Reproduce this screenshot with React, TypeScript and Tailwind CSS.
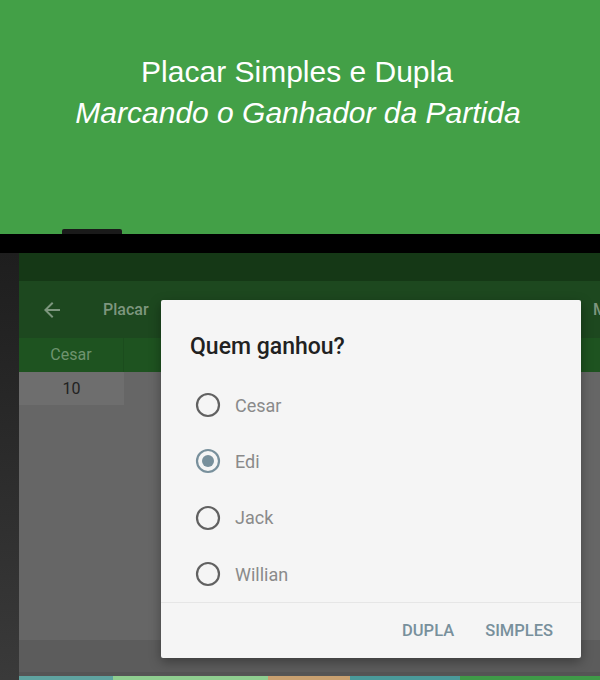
import React from "react";

function Radio({ checked }: { checked?: boolean }) {
  return (
    <svg width="26" height="26" viewBox="0 0 26 26">
      <circle cx="13" cy="13" r="11" fill="none" stroke={checked ? "#78909c" : "#616161"} strokeWidth="2.2" />
      {checked && <circle cx="13" cy="13" r="6" fill="#78909c" />}
    </svg>
  );
}

export default function App() {
  const names = ["Cesar", "Edi", "Jack", "Willian"];
  return (
    <div className="w-[600px] h-[680px] overflow-hidden flex flex-col bg-black" style={{ fontFamily: "Roboto, 'Liberation Sans', sans-serif" }}>
      <div className="relative h-[234px] shrink-0 bg-[#43a047] flex flex-col items-center pt-[51px] text-white" style={{ fontFamily: "'Liberation Sans', Arial, sans-serif" }}>
        <div className="text-[30px] leading-[41px] -ml-[6px]">Placar Simples e Dupla</div>
        <div className="text-[30px] leading-[41px] italic -ml-[4px]">Marcando o Ganhador da Partida</div>
        <div className="absolute left-[62px] bottom-0 w-[60px] h-[5px] bg-[#1a1a1a] rounded-t-[2px]" />
      </div>
      <div className="h-[19px] shrink-0 bg-black" />
      <div className="flex flex-1">
        <div className="w-[19px] shrink-0 bg-gradient-to-b from-[#1e1e1e] to-[#3a3a3a]" />
        <div className="relative flex-1 flex flex-col bg-[#666666]">
          <div className="h-[28px] shrink-0 bg-[#153816]" />
          <div className="h-[57px] shrink-0 bg-[#1d481f] flex items-center">
            <svg width="24" height="24" viewBox="0 0 24 24" className="ml-[21px]">
              <path d="M20 11H7.83l5.59-5.59L12 4l-8 8 8 8 1.41-1.41L7.83 13H20v-2z" fill="#7d967e" />
            </svg>
            <span className="ml-[39px] text-[16px] font-medium text-[#7d967e]">Placar</span>
            <span className="ml-auto mr-[-7px] text-[16px] font-medium text-[#7d967e]">M</span>
          </div>
          <div className="h-[34px] shrink-0 bg-[#1e5320] flex">
            <div className="w-[105px] flex items-center justify-center text-[16px] text-[#6f936f] border-r border-[#1b4c1d]">Cesar</div>
          </div>
          <div className="flex">
            <div className="w-[105px] h-[33px] bg-[#6e6e6e] flex items-center justify-center text-[16px] text-[#222222]">10</div>
          </div>
          <div className="flex-1" />
          <div className="h-[32px] shrink-0 bg-[#5c5c5c]" />
          <div className="h-[4px] shrink-0 bg-[#555555]" />
          <div className="h-[4px] shrink-0 flex">
            <div className="w-[94px] bg-[#5fa3a0]" />
            <div className="w-[155px] bg-[#8fce90]" />
            <div className="w-[82px] bg-[#c8a070]" />
            <div className="w-[110px] bg-[#4a9a9a]" />
            <div className="flex-1 bg-[#3f9a48]" />
          </div>

          <div className="absolute left-[142px] top-[47px] w-[420px] h-[358px] bg-[#f5f5f5] rounded-[2px] shadow-[0_4px_12px_rgba(0,0,0,0.35)] flex flex-col">
            <div className="pl-[29px] pt-[33px] text-[23px] font-medium text-[#212121] leading-[28px]">Quem ganhou?</div>
            <div className="flex flex-col mt-[16px]">
              {names.map((n, i) => (
                <div key={n} className="flex items-center h-[56.3px] shrink-0 pl-[34px]">
                  <Radio checked={i === 1} />
                  <span className="ml-[14px] text-[18px] text-[#8a8a8a]">{n}</span>
                </div>
              ))}
            </div>
            <div className="mt-auto shrink-0 border-t border-[#e6e6e6] h-[57px] flex items-center justify-end pr-[28px] gap-[31px] text-[16.5px] font-medium text-[#78909c]">
              <span>DUPLA</span>
              <span>SIMPLES</span>
            </div>
          </div>
        </div>
      </div>
    </div>
  );
}
